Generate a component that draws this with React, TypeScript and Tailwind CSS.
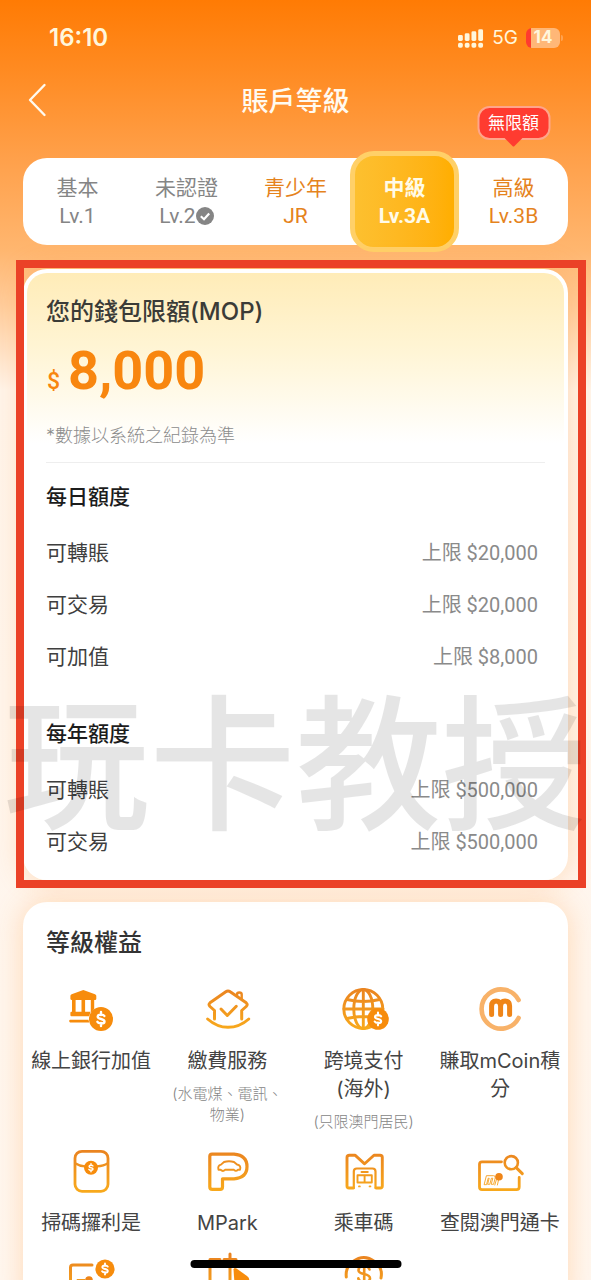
import type { ReactNode } from "react";

const cjk = "font-['Inter','Noto_Sans_CJK_TC',sans-serif]";
const roboto = "font-['Roboto','Noto_Sans_CJK_TC',sans-serif]";

type Tab = { name: string; level: string; tone: "muted" | "active" | "selected"; verified?: boolean; tag?: string };

const tabs: Tab[] = [
  { name: "基本", level: "Lv.1", tone: "muted" },
  { name: "未認證", level: "Lv.2", tone: "muted", verified: true },
  { name: "青少年", level: "JR", tone: "active" },
  { name: "中級", level: "Lv.3A", tone: "selected" },
  { name: "高級", level: "Lv.3B", tone: "active", tag: "無限額" },
];

const toneClass = {
  muted: "text-[#858585]",
  active: "text-[#e5831d]",
  selected:
    "-my-[7px] rounded-3xl border-[5px] border-[#ffd068] bg-linear-to-r from-[#fdc02f] to-[#ffae00] font-bold text-[#fffbe8]",
};

const limits = [
  {
    title: "每日額度",
    rows: [
      ["可轉賬", "上限 $20,000"],
      ["可交易", "上限 $20,000"],
      ["可加值", "上限 $8,000"],
    ],
  },
  {
    title: "每年額度",
    rows: [
      ["可轉賬", "上限 $500,000"],
      ["可交易", "上限 $500,000"],
    ],
  },
];

function Coin({ x, y, r }: { x: number; y: number; r: number }) {
  return (
    <g>
      <circle cx={x} cy={y} r={r} fill="#f78c0c" stroke="none" />
      <g transform={`translate(${x} ${y}) scale(${r / 12})`} fill="none" stroke="#fff" strokeWidth="2.4">
        <path d="M3.4 -3C2.6 -4.6 -3.3 -5.2 -3.3 -2.2C-3.3 .6 3.5 -.6 3.5 2.4C3.5 5.2 -2.6 4.8 -3.6 2.8M0 -7V-4M0 4V7" />
      </g>
    </g>
  );
}

function Icon({ children }: { children: ReactNode }) {
  return (
    <svg
      viewBox="0 0 48 48"
      className="size-12 overflow-visible"
      fill="none"
      stroke="url(#amber)"
      strokeWidth="3"
      strokeLinecap="round"
      strokeLinejoin="round"
      aria-hidden="true"
    >
      {children}
    </svg>
  );
}

const bank = (
  <Icon>
    <g fill="#f78c0c" stroke="none">
      <path d="M16.3 5L28 9.2Q29.3 9.8 29.3 11V13.5Q29.3 15 28 15H4.8Q3.4 15 3.4 13.5V11Q3.4 9.8 4.6 9.2Z" />
      <path d="M5 14H8.6V28H5ZM14.5 14H18.1V28H14.5ZM23.8 14H27.2V24L23.8 28Z" />
      <path d="M4.4 26.8H23.5L22.2 31.2H4.4Q3.4 31.2 3.4 30V27.8Q3.4 26.8 4.4 26.8ZM3.2 34.8H21.5L22.2 37.4H3.2Q2.2 37.4 2.2 36.1Q2.2 34.8 3.2 34.8Z" />
    </g>
    <Coin x={34} y={34} r={12} />
  </Icon>
);

const house = (
  <Icon>
    <path d="M11.5 34V25.5L7 21.5Q5 19.5 7 17.8L22.8 6.8Q25 5.2 27.2 6.8L43.2 17.8Q45.2 19.5 43.2 21.5L38.7 25.5V34" />
    <path d="M34 11V9.5Q34 7.5 36.3 7.5Q38.7 7.5 38.7 9.5V14" strokeWidth="2.4" />
    <path d="M18 24L24.3 30.5L33.3 21.3" />
    <path d="M4.6 34Q14 42.3 25 42.3Q36.5 42.3 45.8 34" />
  </Icon>
);

const globe = (
  <Icon>
    <g strokeWidth="2.9">
      <circle cx="23.3" cy="24" r="19.5" />
      <ellipse cx="23.3" cy="24" rx="9.5" ry="19.5" />
      <path d="M23.3 4.5V43.5M4 24H43M7 14.5Q23.3 18.5 39.6 14.5M7 33.5Q23.3 29.5 39.6 33.5" />
    </g>
    <Coin x={38} y={34} r={10.8} />
  </Icon>
);

const mcoin = (
  <Icon>
    <path d="M42.6 15A19.6 19.6 0 1 0 42.6 33" stroke="#f8b269" strokeWidth="4.6" />
    <path d="M15.6 29.5V21Q15.6 16 20.1 16Q24.6 16 24.6 21V29.5V21Q24.6 16 29.1 16Q33.6 16 33.6 21V29.5" stroke="#ef8518" strokeWidth="5" />
  </Icon>
);

const envelope = (
  <Icon>
    <rect x="8" y="4.3" width="33" height="40" rx="7" strokeWidth="2.8" />
    <path d="M8.5 16.5Q12 18.8 18 19.4M40.5 16.5Q37 18.8 30 19.4" strokeWidth="2.4" />
    <Coin x={24} y={20.7} r={7} />
  </Icon>
);

const parking = (
  <Icon>
    <path d="M9 7.2H31Q44 8.4 44 19.6Q44 31 31 31.8H19.5V40Q19.5 42.4 17.2 42.4H9.2Q6.8 42.4 6.8 40V9.5Q6.8 7.2 9 7.2Z" strokeWidth="3.2" />
    <path d="M17.5 22.8H15.5Q14.3 18.5 18 17.6L21 15Q26 13.6 31 15L34 17.5Q38.5 18.2 37 22.8H34.8Q33 25 31 22.8H22Q20 25 17.5 22.8Z" strokeWidth="1.9" />
  </Icon>
);

const bus = (
  <Icon>
    <path d="M13.5 41H9Q7 41 7 39V10.5Q7 8.2 9.5 8.2H15L24.6 16.8L34 8.2H40Q42.3 8.2 42.3 10.5V39Q42.3 41 40.3 41H36" strokeWidth="2.9" />
    <path d="M13.8 41V24.5Q13.8 21.5 16.8 21.5H32.5Q35.5 21.5 35.5 24.5V41" strokeWidth="2.2" />
    <path d="M17.5 28.3H31.8V35.5H17.5ZM24.6 28.3V35.5M21.5 25H27.8M19 39.4H19.8M29.6 39.4H30.4" strokeWidth="1.9" />
  </Icon>
);

const cardSearch = (
  <Icon>
    <path d="M25.5 14.8H6Q3.5 14.8 3.5 17.3V40Q3.5 42.6 6 42.6H40.5Q43.2 42.6 43.2 40V30.5" strokeWidth="2.8" />
    <circle cx="35.3" cy="15.7" r="6.6" strokeWidth="2.6" />
    <path d="M40.2 20.6L46.3 26.6" strokeWidth="3" />
    <path d="M8.2 37.3L10.4 28.7H17.6Q19.8 28.7 19.2 31L17.6 37.3H15.2L16.8 31.2H15.4L13.8 37.3H11.6L13.2 31.2H12.2L10.6 37.3ZM18.8 38L20.4 32.6H22.6L21.4 38" strokeWidth="0.9" />
    <circle cx="23" cy="29.8" r="3.8" fill="#ef8518" stroke="none" />
  </Icon>
);

const cardCoin = (
  <Icon>
    <path d="M25 13H6Q3.5 13 3.5 15.5V40H43V30" />
    <path d="M8 37L10 27.5H18L16 37" strokeWidth="1" />
    <circle cx="22" cy="28" r="3.8" fill="#ef8518" stroke="none" />
    <Coin x={38} y={17} r={9.6} />
  </Icon>
);

const ticket = (
  <Icon>
    <path d="M17 7.4H7V40H20M27 2V40M21 7.4H33" />
    <path d="M30.5 17.5Q31 15 33.5 16.5L44 24Q48 27 45 31L32 38Z" fill="#f78c0c" stroke="none" />
  </Icon>
);

const cashback = (
  <Icon>
    <path d="M13 9.5Q24 1.5 34.5 9.5M9 13.5Q5.5 18 6.3 25M38.5 13.5Q42.5 18 41 26" />
    <path d="M29.5 17.5C28 12.5 18.5 13 18.5 18.2C18.5 23.5 30 20.5 30 26.3C30 31.5 19 31 18.3 26.3M24.2 11V34" strokeWidth="2.6" />
  </Icon>
);

const benefits: { icon: ReactNode; label: string; note?: string }[] = [
  { icon: bank, label: "線上銀行加值" },
  { icon: house, label: "繳費服務", note: "(水電煤、電訊、\n物業)" },
  { icon: globe, label: "跨境支付\n(海外)", note: "(只限澳門居民)" },
  { icon: mcoin, label: "賺取mCoin積\n分" },
  { icon: envelope, label: "掃碼攞利是" },
  { icon: parking, label: "MPark" },
  { icon: bus, label: "乘車碼" },
  { icon: cardSearch, label: "查閱澳門通卡" },
  { icon: cardCoin, label: "" },
  { icon: ticket, label: "" },
  { icon: cashback, label: "" },
];

function StatusBar() {
  return (
    <div className="flex h-[76px] items-center justify-between pr-7 pl-[49px] text-[#fff6dc]">
      <span className="text-2xl font-semibold">16:10</span>
      <div className="flex items-center gap-2">
        <svg viewBox="0 0 27 20" className="h-5 w-[26px]" fill="currentColor" aria-hidden="true">
          <rect x="0" y="7" width="5" height="6" rx="1.5" />
          <rect x="7" y="5" width="5" height="8" rx="1.5" />
          <rect x="14" y="3" width="5" height="10" rx="1.5" />
          <rect x="21" y="1" width="5" height="12" rx="1.5" />
          <rect x="0" y="15" width="5" height="5" rx="1.8" />
          <rect x="7" y="15" width="5" height="5" rx="1.8" />
          <rect x="14" y="15" width="5" height="5" rx="1.8" />
          <rect x="21" y="15" width="5" height="5" rx="1.8" />
        </svg>
        <span className="text-[19px]">5G</span>
        <div className="flex items-center gap-px">
          <div className="flex h-5 w-[34px] items-center justify-center rounded-md bg-[linear-gradient(90deg,#ff3b2f_5px,#ffb777_5px)]">
            <span className="text-[17px] font-bold">14</span>
          </div>
          <span className="h-1.5 w-0.5 rounded-r bg-[#ffb777]/60" />
        </div>
      </div>
    </div>
  );
}

export default function App() {
  return (
    <div className={`relative h-screen overflow-hidden bg-[#fff7f0] ${cjk}`}>
      <svg className="absolute size-0" aria-hidden="true">
        <defs>
          <linearGradient id="amber" gradientUnits="userSpaceOnUse" x1="0" y1="4" x2="0" y2="44">
            <stop offset="0" stopColor="#ea8420" />
            <stop offset="1" stopColor="#f8a91c" />
          </linearGradient>
        </defs>
      </svg>

      <div className="bg-[linear-gradient(180deg,#ff7b04_0px,#ff8c24_76px,#ffa04a_158px,#ffb66f_250px,#ffcfa0_310px,#fff4ea_390px,#fff7f0_100%)]">
        <StatusBar />

        <header className="grid h-12 grid-cols-[1fr_auto_1fr] items-center px-[23px] text-[#fffaf0]">
          <button type="button" aria-label="返回" className="flex h-12 w-8 items-center pl-1">
            <svg viewBox="0 0 20 34" className="h-[34px] w-5" fill="none" stroke="currentColor" strokeWidth="2.4" strokeLinecap="round" strokeLinejoin="round">
              <path d="M17.5 2L3 17L17.5 32" />
            </svg>
          </button>
          <h1 className="pt-1 text-[27px] leading-8 font-medium">賬戶等級</h1>
        </header>

        <main className="flex flex-col px-[23px] pt-[34px]">
          <nav className="grid h-[87px] grid-cols-5 rounded-3xl bg-white">
            {tabs.map((tab) => (
              <button
                key={tab.name}
                type="button"
                className={`relative flex flex-col items-center justify-center text-[21px] leading-7 ${toneClass[tab.tone]}`}
              >
                <span>{tab.name}</span>
                <span className={`flex items-center ${roboto}`}>
                  {tab.level}
                  {tab.verified && (
                    <svg viewBox="0 0 18 18" className="size-[18px]" aria-hidden="true">
                      <circle cx="9" cy="9" r="9" fill="#858585" />
                      <path d="M4.8 9.2L8 12.2L13.2 6.4" fill="none" stroke="#fff" strokeWidth="2.2" />
                    </svg>
                  )}
                </span>
                {tab.tag && (
                  <span className="absolute -top-[52px] left-1/2 flex h-[34px] w-[73px] -translate-x-1/2 items-center justify-center rounded-xl border-2 border-[#ffa58a] bg-[#ff3b30] text-[17px] whitespace-nowrap text-white">
                    {tab.tag}
                    <svg viewBox="0 0 18 9" className="absolute top-full h-[9px] w-[18px]" aria-hidden="true">
                      <path d="M0 0H18L10 8Q9 9 8 8Z" fill="#ff3b30" />
                    </svg>
                  </span>
                )}
              </button>
            ))}
          </nav>

          <section className="relative mt-6 rounded-3xl border-4 border-b-0 border-white bg-white bg-[linear-gradient(180deg,#ffecb8_0px,#fff5d6_80px,#ffffff_170px)] px-[19px] pt-[23px] pb-3 shadow-[0_0_28px_rgba(255,150,50,0.3)]">
            <h2 className="text-2xl leading-8 font-medium text-[#3b3b37]">您的錢包限額(MOP)</h2>
            <p className={`mt-[11px] flex items-baseline gap-2 pl-px text-[#f8860f] ${roboto}`}>
              <span className="text-[23px] leading-6 font-medium">$</span>
              <span className="text-[54px] leading-[64px] font-bold">8,000</span>
            </p>
            <p className="mt-[21px] text-lg leading-6 font-light text-[#8c8c8c]">*數據以系統之紀錄為準</p>
            <hr className="mt-[14px] border-[#eeeeee]" />
            {limits.map((group, i) => (
              <div key={group.title} className={i === 0 ? "mt-5" : "mt-[37px]"}>
                <h3 className="text-[21px] leading-7 font-medium text-[#1c1c1c]">{group.title}</h3>
                <dl className="mt-4">
                  {group.rows.map(([name, value]) => (
                    <div key={name} className="flex h-[52px] items-center justify-between pr-[7px]">
                      <dt className="text-[21px] text-[#3f3f3f]">{name}</dt>
                      <dd className={`text-[20px] text-[#8a8a8a] ${roboto}`}>{value}</dd>
                    </div>
                  ))}
                </dl>
              </div>
            ))}
            <div className="pointer-events-none absolute -top-[13px] -right-[22px] -bottom-2 -left-[11px] border-8 border-[#eb4127]" />
          </section>

          <section className="mt-[22px] rounded-3xl bg-white pt-[25px] shadow-[0_0_28px_rgba(255,150,50,0.3)]">
            <h2 className="px-[23px] text-2xl leading-8 font-medium text-[#333333]">等級權益</h2>
            <ul className="mt-[26px] grid grid-cols-4 gap-y-[15px]">
              {benefits.map((item, i) => (
                <li key={i} className="flex flex-col items-center text-center whitespace-pre-line">
                  {item.icon}
                  <span className="mt-[14px] text-xl leading-7 text-[#444444]">{item.label}</span>
                  {item.note && <span className="mt-2 text-[15px] leading-[21px] font-light text-[#858585]">{item.note}</span>}
                </li>
              ))}
            </ul>
          </section>
        </main>
      </div>

      <p className="pointer-events-none absolute inset-x-0 top-[692px] text-center text-[146px] leading-[146px] font-medium whitespace-nowrap text-black/10">
        玩卡教授
      </p>
      <div className="absolute bottom-3 left-1/2 h-2 w-[211px] -translate-x-1/2 rounded-full bg-black" />
    </div>
  );
}
